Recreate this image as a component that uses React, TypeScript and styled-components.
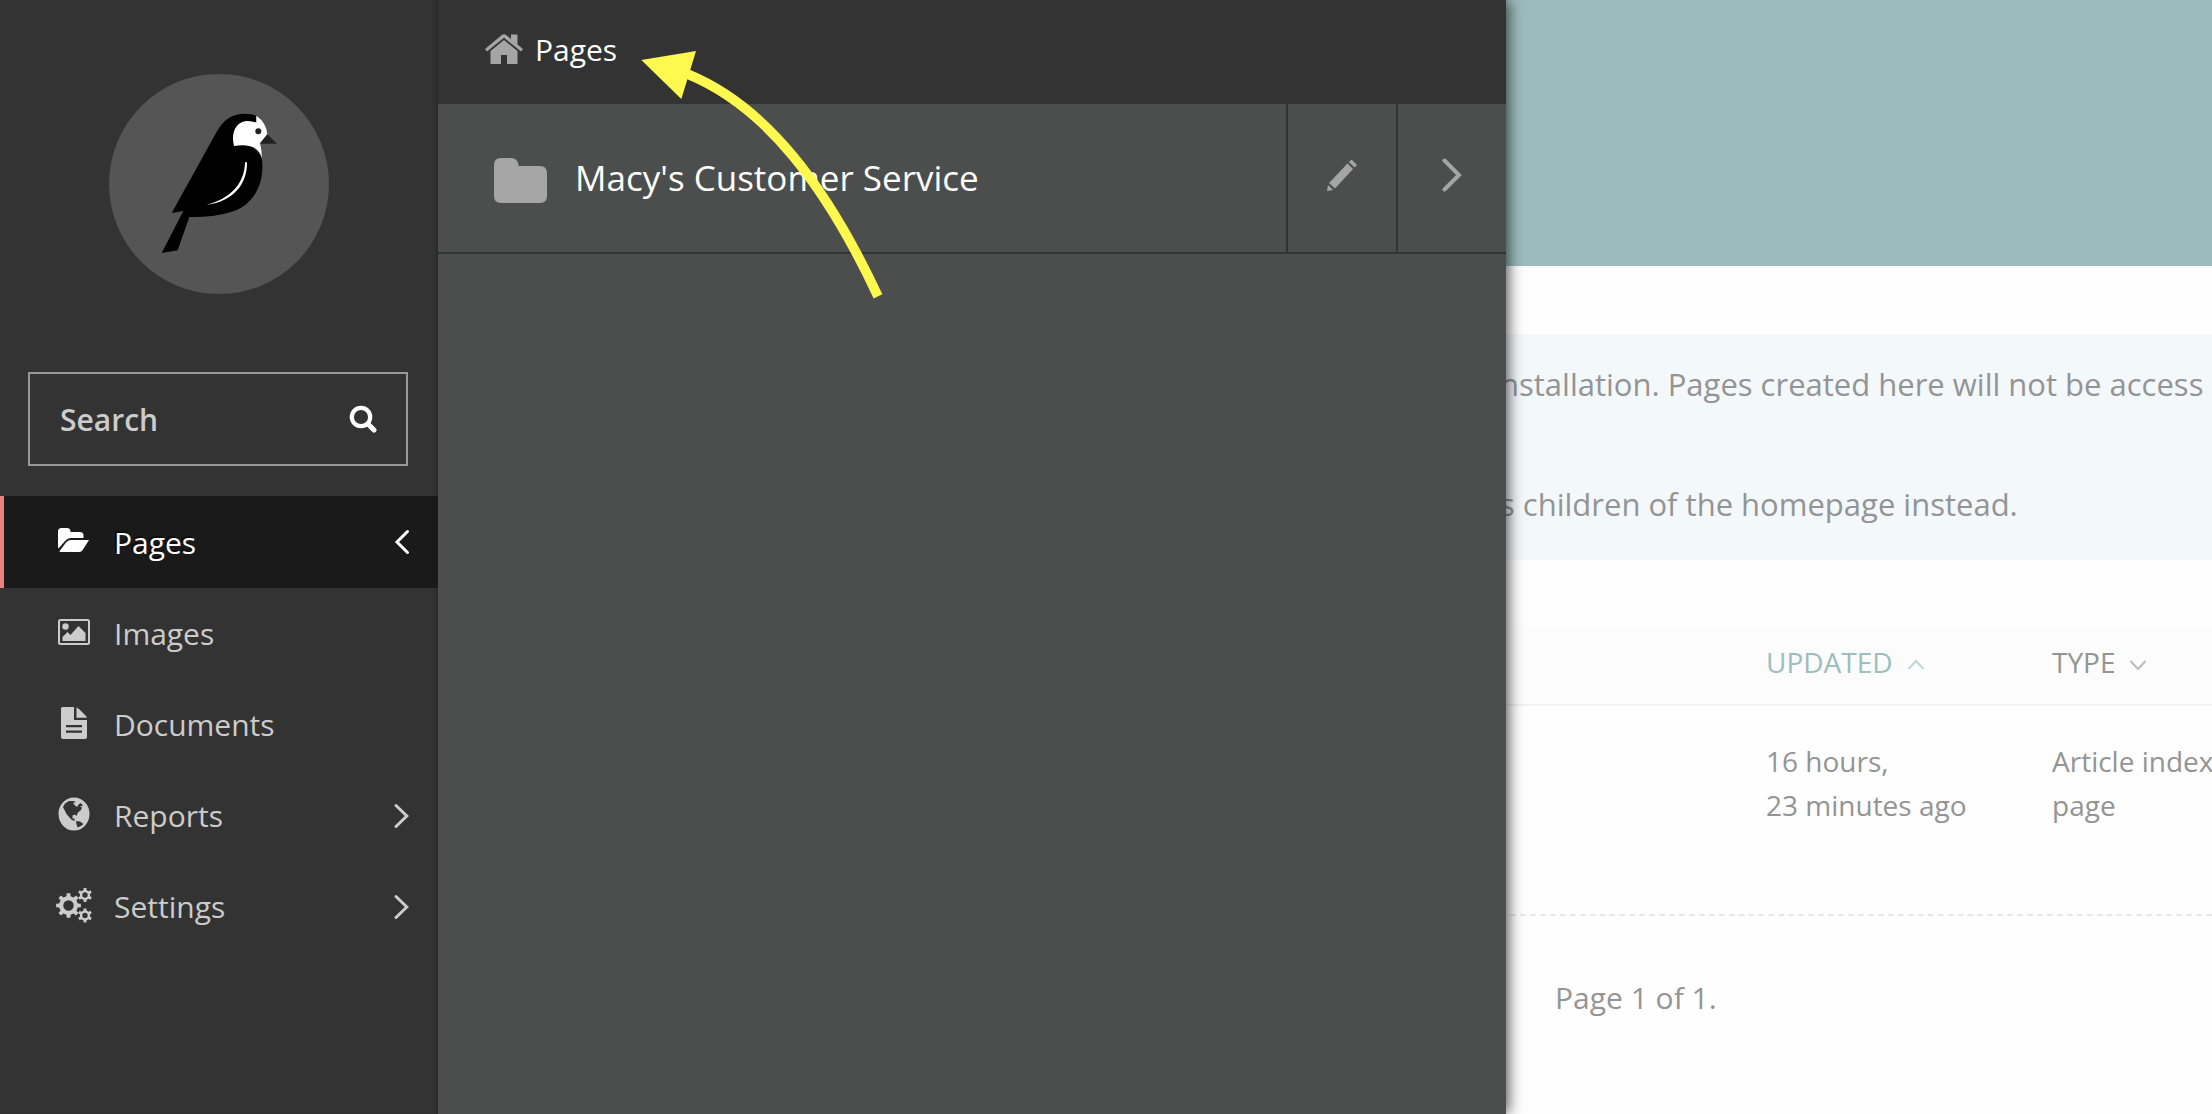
import React from "react";
import styled, { createGlobalStyle } from "styled-components";

const GlobalStyle = createGlobalStyle`
  *, *::before, *::after { box-sizing: border-box; }
  body { margin: 0; background: #fefefe; }
  body, button, input { font-family: "Open Sans", "Noto Sans", sans-serif; }
`;

const Shell = styled.div`
  position: relative;
  display: flex;
  min-height: 100vh;
  overflow: hidden;
`;

const Sidebar = styled.aside`
  flex: 0 0 438px;
  min-width: 0;
  padding-top: 74px;
  background: #333;
  box-shadow: inset -6px 0 6px -6px rgba(0, 0, 0, 0.4);
`;

const LogoLink = styled.a`
  display: block;
  width: 220px;
  height: 220px;
  margin: 0 auto 78px;
  border-radius: 50%;
  background: #555;
  svg { display: block; }
`;

const SearchForm = styled.form`
  display: flex;
  align-items: center;
  height: 94px;
  margin: 0 30px 30px 28px;
  border: 2px solid #999;
`;

const SearchInput = styled.input`
  flex: 1;
  width: 100%;
  min-width: 0;
  height: 100%;
  padding: 0 0 0 30px;
  border: 0;
  outline: 0;
  background: transparent;
  color: #ccc;
  font-size: 30px;
  font-weight: 600;
  &::placeholder { color: #ccc; opacity: 1; }
`;

const SearchButton = styled.button`
  display: flex;
  padding: 0 29px;
  border: 0;
  background: transparent;
  color: #fff;
`;

const NavList = styled.ul`
  margin: 0;
  padding: 0;
  list-style: none;
`;

const NavLink = styled.a<{ $active?: boolean }>`
  display: flex;
  align-items: center;
  height: ${(p) => (p.$active ? 92 : 91)}px;
  padding: 0 28px 0 52px;
  border-left: 4px solid ${(p) => (p.$active ? "#e9827f" : "transparent")};
  background: ${(p) => (p.$active ? "#1a1a1a" : "transparent")};
  color: ${(p) => (p.$active ? "#fff" : "#ccc")};
  font-size: 30px;
  font-weight: 400;
  text-decoration: none;
  text-shadow: ${(p) => (p.$active ? "-2px -2px 0 rgba(0, 0, 0, 0.5)" : "none")};
`;

const NavIcon = styled.svg`
  flex: none;
  width: 36px;
  height: 36px;
  margin: 0 22px 4px 0;
`;

const NavText = styled.span`
  flex: 1;
`;

const Explorer = styled.nav`
  z-index: 1;
  flex: 0 0 1068px;
  background: #4c4e4d;
  box-shadow: 2px 0 14px rgba(0, 0, 0, 0.7);
  clip-path: inset(0 -40px 0 0);
`;

const ExplorerHeader = styled.a`
  display: flex;
  align-items: center;
  gap: 12px;
  height: 104px;
  padding: 0 47px 6px;
  background: #333;
  color: #fff;
  font-size: 30px;
  text-decoration: none;
`;

const ExplorerRow = styled.div`
  display: flex;
  height: 150px;
  border-bottom: 2px solid #333;
`;

const ExplorerPage = styled.a`
  flex: 1;
  display: flex;
  align-items: center;
  gap: 28px;
  padding-left: 56px;
  color: #fff;
  font-size: 35px;
  text-decoration: none;
  svg { margin-top: 4px; }
`;

const PageTitle = styled.span`
  padding-bottom: 2px;
`;

const ExplorerAction = styled.a`
  display: flex;
  align-items: center;
  justify-content: center;
  width: 110px;
  padding-bottom: 6px;
  border-left: 2px solid #333;
  color: #a5a5a5;
`;

const Annotation = styled.svg`
  position: absolute;
  z-index: 2;
  left: 640px;
  top: 50px;
  pointer-events: none;
`;

const Main = styled.main`
  flex: 1;
  min-width: 0;
  margin-left: -6px;
  overflow: hidden;
  color: #949494;
`;

const Banner = styled.header`
  height: 266px;
  margin-bottom: 68px;
  background: #9bbcbc;
`;

const HelpBlock = styled.section`
  height: 226px;
  margin-bottom: 66px;
  padding-top: 26px;
  background: #f3f8fb;
  font-size: 31px;
  line-height: 48px;
  white-space: nowrap;
  p { margin: 0 0 72px; }
`;

const ListingFrame = styled.div`
  border-bottom: 2px dashed #e8e8e8;
`;

const Listing = styled.table`
  width: 100%;
  table-layout: fixed;
  border-spacing: 0;
  font-size: 28px;
  line-height: 44px;
  white-space: nowrap;
`;

const Col = styled.col<{ $width?: number }>`
  width: ${(p) => (p.$width ? `${p.$width}px` : "auto")};
`;

const HeadCell = styled.th`
  height: 80px;
  padding: 0 0 6px;
  border-bottom: 2px solid #f1f1f1;
  background: #fcfcfc;
  font-weight: 400;
  text-align: left;
`;

const SortLink = styled.a<{ $current?: boolean }>`
  display: inline-flex;
  align-items: center;
  gap: 14px;
  color: ${(p) => (p.$current ? "#9bbebe" : "#949494")};
  text-decoration: none;
  svg { margin-top: 4px; opacity: 0.6; }
`;

const BodyCell = styled.td`
  height: 208px;
  padding: 33px 0 0;
  vertical-align: top;
`;

const Pagination = styled.p`
  margin: 58px 0 0 55px;
  font-size: 30px;
  line-height: 48px;
`;

function gear(cx: number, cy: number, outer: number, root: number, hole: number, teeth: number) {
  const pts: string[] = [];
  const step = (Math.PI * 2) / teeth;
  for (let i = 0; i < teeth; i++) {
    const a = i * step - Math.PI / 2;
    [
      [root, -0.27],
      [outer, -0.19],
      [outer, 0.19],
      [root, 0.27],
    ].forEach(([r, k]) => {
      pts.push(`${(cx + r * Math.cos(a + k * step)).toFixed(2)} ${(cy + r * Math.sin(a + k * step)).toFixed(2)}`);
    });
  }
  return `M${pts.join("L")}ZM${cx - hole} ${cy}a${hole} ${hole} 0 1 0 ${hole * 2} 0a${hole} ${hole} 0 1 0 ${-hole * 2} 0Z`;
}

const icons: Record<string, React.ReactNode> = {
  pages: (
    <>
      <path d="M2 25V9.500Q2 6 5.500 6H11Q14 6 14.500 9V10H24Q27 10 27.500 13V16H15Q11.500 16 9 19L2.500 26.500Z" />
      <path d="M14.500 18H33L27 27.500Q25.500 30 23 30H4Q3 30 4 28.500L10 20.500Q12 18 14.500 18Z" />
    </>
  ),
  images: (
    <>
      <path fillRule="evenodd" d="M4.500 5H31.500Q34 5 34 7.500V28.500Q34 31 31.500 31H4.500Q2 31 2 28.500V7.500Q2 5 4.500 5ZM4.500 7Q4 7 4 7.500V28.500Q4 29 4.500 29H31.500Q32 29 32 28.500V7.500Q32 7 31.500 7Z" />
      <circle cx="9.500" cy="12.500" r="3.200" />
      <path d="M6.500 27V23L11.500 18L14.500 21L22.500 12L29.500 19V27Z" />
    </>
  ),
  documents: (
    <>
      <path fillRule="evenodd" d="M6.500 2H18V15H31V32Q31 34 29 34H7Q5 34 5 32V3.500Q5 2 6.500 2ZM10 20V22.200H26V20ZM10 25.500V27.800H26V25.500Z" />
      <path d="M20.500 2.500Q22 3 23 4L29.500 10.500Q30.500 11.500 31 12.700H20.500Z" />
    </>
  ),
  reports: (
    <path
      fillRule="evenodd"
      d="M18 1.500A15.500 16.500 0 1 1 18 34.500A15.500 16.500 0 1 1 18 1.500ZM13 5L9 7.500L7 11L8.500 14L10.500 18L13 21L16 24L18.500 25V22.500H16.500V19.500L19 18.500L20.500 20L22 16.500L25 14L26 11.500L23.500 10.500L27 10L25 7L22.500 8.500L21 11L18.500 9L17 6.500H20L18 5ZM20 25L24 25.500L27.500 28L25 30L21.500 31.500L20.500 28Z"
    />
  ),
  settings: (
    <path
      fillRule="evenodd"
      d={gear(12.5, 18.5, 12.5, 9.5, 5.2, 8) + gear(29, 8, 7.2, 5.2, 2.7, 6) + gear(29, 28.5, 7.2, 5.2, 2.7, 6)}
    />
  ),
};

const navItems = [
  { id: "pages", label: "Pages", arrow: "left" },
  { id: "images", label: "Images" },
  { id: "documents", label: "Documents" },
  { id: "reports", label: "Reports", arrow: "right" },
  { id: "settings", label: "Settings", arrow: "right" },
];

function Arrow({ left }: { left?: boolean }) {
  return (
    <svg width="16" height="26" viewBox="0 0 16 26" fill="none" stroke="currentColor" strokeWidth="3" strokeLinecap="round">
      <path d={left ? "M13.500 2.500L3 13L13.500 23.500" : "M2 2.500L12.800 13L2 23.500"} />
    </svg>
  );
}

function SortArrow({ up }: { up?: boolean }) {
  return (
    <svg width="18" height="12" viewBox="0 0 18 12" fill="none" stroke="currentColor" strokeWidth="2">
      <path d={up ? "M1.500 11L9 3L16.500 11" : "M1.500 3L9 11L16.500 3"} />
    </svg>
  );
}

function Bird() {
  return (
    <svg width="220" height="220" viewBox="54 42 660 660">
      <path
        fill="#000"
        d="M242 459L378 214C396 180 424 161 462 161Q482 161 496 167V188L480 258Q514 278 514 310C518 390 474 440 420 456Q372 472 295 471L260 571L212 579L277 453Z"
      />
      <path
        fill="#fff"
        d="M496 167Q526 188 529 223L507 249Q512 268 513 294C504 262 474 250 429 258C418 215 438 183 470 183Q484 183 496 188Z"
      />
      <path fill="#231f20" d="M529 223L558 251H507Z" />
      <circle cx="502" cy="214" r="9" fill="#231f20" />
      <path fill="#fff" d="M462 307H468C469 372 428 424 347 435C420 415 461 370 462 307Z" />
    </svg>
  );
}

export default function App() {
  return (
    <>
      <GlobalStyle />
      <Shell>
        <Sidebar>
          <LogoLink href="#" aria-label="Dashboard">
            <Bird />
          </LogoLink>
          <SearchForm role="search">
            <SearchInput type="text" placeholder="Search" aria-label="Search" />
            <SearchButton type="button" aria-label="Submit search">
              <svg width="28" height="28" viewBox="0 0 28 28" fill="none" stroke="currentColor" strokeLinecap="round">
                <circle cx="12" cy="12" r="9.200" strokeWidth="4.200" />
                <path d="M19 19L25 25" strokeWidth="5" />
              </svg>
            </SearchButton>
          </SearchForm>
          <NavList>
            {navItems.map((item) => (
              <li key={item.id}>
                <NavLink href="#" $active={item.id === "pages"}>
                  <NavIcon viewBox="0 0 36 36" fill="currentColor">
                    {icons[item.id]}
                  </NavIcon>
                  <NavText>{item.label}</NavText>
                  {item.arrow && <Arrow left={item.arrow === "left"} />}
                </NavLink>
              </li>
            ))}
          </NavList>
        </Sidebar>

        <Explorer aria-label="Page explorer">
          <ExplorerHeader href="#">
            <svg width="38" height="32" viewBox="0 0 38 32" fill="#a5a5a5">
              <path d="M0 16L16.500 2.200Q19 0.200 21.500 2.200L26 6V1.500H32.500V11.500L38 16L36 18.500L19 4.800L2 18.500Z" />
              <path d="M5.500 18L19 7L32.500 18V31H22V22H16V31H5.500Z" />
            </svg>
            Pages
          </ExplorerHeader>
          <ExplorerRow>
            <ExplorerPage href="#">
              <svg width="53" height="45" viewBox="0 0 53 45" fill="#a5a5a5">
                <path d="M7 0H17Q24 0 24.500 8H46Q53 8 53 15V38Q53 45 46 45H7Q0 45 0 38V7Q0 0 7 0Z" />
              </svg>
              <PageTitle>Macy's Customer Service</PageTitle>
            </ExplorerPage>
            <ExplorerAction href="#" aria-label="Edit Macy's Customer Service">
              <svg width="30" height="32" viewBox="0 0 30 32" fill="currentColor">
                <path d="M24.500 0.500L30 6L27.500 8.500L22 3Z" />
                <path d="M20.500 4.500L26 10L8 29.500L2 24Z" />
                <path d="M1 26L6 31L0 32Z" />
              </svg>
            </ExplorerAction>
            <ExplorerAction href="#" aria-label="View child pages">
              <svg width="20" height="34" viewBox="0 0 20 34" fill="none" stroke="currentColor" strokeWidth="4" strokeLinecap="round">
                <path d="M2.500 2.500L17 17L2.500 31.500" />
              </svg>
            </ExplorerAction>
          </ExplorerRow>
        </Explorer>

        <Main>
          <Banner />
          <HelpBlock>
            <p>nstallation. Pages created here will not be access</p>
            <p>s children of the homepage instead.</p>
          </HelpBlock>
          <ListingFrame>
            <Listing>
              <colgroup>
                <Col $width={266} />
                <Col $width={286} />
                <Col />
              </colgroup>
              <thead>
                <tr>
                  <HeadCell />
                  <HeadCell scope="col">
                    <SortLink href="#" $current>
                      UPDATED
                      <SortArrow up />
                    </SortLink>
                  </HeadCell>
                  <HeadCell scope="col">
                    <SortLink href="#">
                      TYPE
                      <SortArrow />
                    </SortLink>
                  </HeadCell>
                </tr>
              </thead>
              <tbody>
                <tr>
                  <BodyCell />
                  <BodyCell>
                    16 hours,
                    <br />
                    23 minutes ago
                  </BodyCell>
                  <BodyCell>
                    Article index
                    <br />
                    page
                  </BodyCell>
                </tr>
              </tbody>
            </Listing>
          </ListingFrame>
          <Pagination>Page 1 of 1.</Pagination>
        </Main>

        <Annotation width="244" height="250" viewBox="630 150 732 750" aria-hidden="true">
          <path fill="#fff94f" d="M634 180L798 153L754 297Z" />
          <path fill="none" stroke="#fff94f" strokeWidth="29" d="M774 223C1010 320 1190 560 1344 889" />
        </Annotation>
      </Shell>
    </>
  );
}
